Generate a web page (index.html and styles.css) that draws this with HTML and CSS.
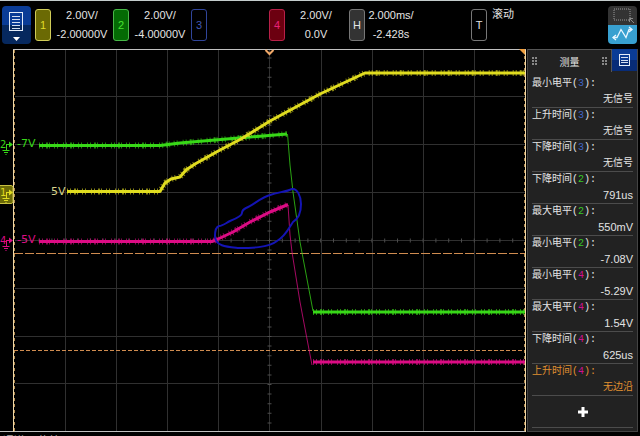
FILE: index.html
```html
<!DOCTYPE html>
<html lang="zh-CN">

<head>
    <meta charset="UTF-8">
    <meta name="viewport" content="width=device-width, initial-scale=1">
    <title>示波器</title>
    <link rel="stylesheet" href="styles.css">
</head>

<body>
    <header class="topbar">
        <button class="menu" type="button" aria-label="菜单">
            <svg width="29" height="38" viewBox="0 0 29 38">
                <rect x="7.500" y="6.500" width="13" height="18" fill="none" stroke="#e4ecf8" />
                <path d="M10 10.500h8M10 13.500h8M10 16.500h8M10 19.500h8M10 22.500h8" stroke="#d4def0" />
                <path d="M11 31h7l-3.500 4z" fill="#fff" />
            </svg>
        </button>
        <div class="channel">
            <button class="key ch1" type="button">1</button>
            <p class="scale">2.00V/<br>-2.00000V</p>
        </div>
        <div class="channel">
            <button class="key ch2" type="button">2</button>
            <p class="scale">2.00V/<br>-4.00000V</p>
        </div>
        <div class="channel">
            <button class="key ch3" type="button">3</button>
        </div>
        <div class="channel">
            <button class="key ch4" type="button">4</button>
            <p class="scale">2.00V/<br>0.0V</p>
        </div>
        <div class="horizontal">
            <button class="key hor" type="button">H</button>
            <p class="scale">2.000ms/<br>-2.428s</p>
        </div>
        <div class="trigger">
            <button class="key trig" type="button">T</button>
            <p class="mode">滚动</p>
        </div>
        <div class="touch">
            <button class="zone" type="button" aria-label="区域">
                <svg width="29" height="19" viewBox="0 0 29 19">
                    <rect x="6" y="3" width="16" height="11" fill="none" stroke="#999" stroke-dasharray="1 1" />
                    <path d="M26 17l-4-4M21.500 16v-3.500h3.500" fill="none" stroke="#888" />
                </svg>
            </button>
            <button class="drag" type="button" aria-label="波形">
                <svg width="29" height="19" viewBox="0 0 29 19">
                    <path d="M5 12.500h4l4-8 5 8 3-8h3" fill="none" stroke="#e8f6ff" stroke-width="1.300" />
                    <path d="M8 10l-3 2.500 3 2.500M21 2l3 2.500-3 2.500" fill="none" stroke="#e8f6ff" stroke-width="1.300" />
                </svg>
            </button>
        </div>
    </header>

    <main class="work">
        <svg class="plot" viewBox="0 49 527 384" role="img" aria-label="波形">
            <!-- grid -->
            <path class="grid" d="M65.500 50v382M116.500 50v382M167.500 50v382M218.500 50v382M269.500 50v382M321.500 50v382M372.500 50v382M423.500 50v382M474.500 50v382" />
            <path class="grid" d="M15 96.500h510M15 144.500h510M15 192.500h510M15 240.500h510M15 288.500h510M15 336.500h510M15 383.500h510" />
            <!-- the ticks are a thick line cut into 1px dashes -->
            <path class="tick" d="M269.500 48v384" stroke-dasharray="1 8.600" />
            <path class="tick" d="M13 240.500h512" stroke-dasharray="1 11.800" />

            <!-- frame -->
            <path class="edge" d="M13 49.500h513M0 431.500h526" />
            <path class="side" d="M13.500 50v382M525.500 50v382" />
            <path class="side-dash" d="M14.500 50v382M524.500 50v382" />
            <path class="corner" d="M519 49h6v6z" />
            <path class="trigger-mark" d="M265.500 50l4 4 4-4" />

            <!-- cursors -->
            <path class="cursor" d="M14 253.500h511" stroke-dasharray="9 2" />
            <path class="cursor" d="M14 350.500h511" stroke-dasharray="4 2" />

            <!-- traces -->
            <g class="green">
                <path class="thin" d="M287.500 134L290 165L293 192L300 242L313 311" />
                <path class="line" d="M39 145.500H160L180 143L287 134" />
                <path class="fuzz" d="M39 145.500H160L180 143L287 134" />
                <path class="line" d="M313 312H525" />
                <path class="fuzz" d="M313 312H525" />
            </g>
            <g class="pink">
                <path class="thin" d="M288 205L290 235L292 252L300 302L307 339L312 365" />
                <path class="line" d="M39 241.500H212L218 239L233 232L250 222L270 212L288 204.500" />
                <path class="fuzz" d="M39 241.500H212L218 239L233 232L250 222L270 212L288 204.500" />
                <path class="line" d="M313 362H525" />
                <path class="fuzz" d="M313 362H525" />
            </g>
            <g class="yellow">
                <path class="line" d="M67 191.500H160L165 183L171 179L180 177L186 170L195 164L220 150L241 139L270 121L320 94L365 73H525" />
                <path class="fuzz" d="M67 191.500H160L165 183L171 179L180 177L186 170L195 164L220 150L241 139L270 121L320 94L365 73H525" />
            </g>
            <path class="pen" d="M215 236C215 231 216 227 219 226C223 226 226 223 230 221C235 219 242 216 242 213C242 211 244 209 246 208C253 205 262 197 270 195C278 192 286 192 292 189C297 188 301 196 301 204C301 214 298 219 293 222C290 226 286 236 277 241C268 248 250 248 239 248C229 247 215 247 215 236z" />

            <!-- ground markers -->
            <g class="green">
                <text class="mark" x="0" y="148">2</text>
                <path class="ground" d="M6 144.500h4M6.500 144v6M2.500 150.500h7M4 152.500h4M5.500 154.500h1" />
                <path class="arrow" d="M9 141.500l4 3-4 3z" />
                <text class="level" x="17" y="147">-7V</text>
            </g>
            <g class="yellow">
                <rect x="-2" y="185.500" width="15" height="18" rx="2" fill="#6b6a08" stroke="#c8c040" />
                <text class="mark" x="0" y="196">1</text>
                <path class="ground" d="M6 192.500h3M6.500 192v6M2.500 198.500h7M4 200.500h4M5.500 202.500h1" />
                <path class="arrow" d="M9 189.500l4 3-4 3z" />
                <text class="level pale" x="51" y="195">5V</text>
            </g>
            <g class="pink">
                <text class="mark" x="0" y="244">4</text>
                <path class="ground" d="M6 240.500h4M6.500 240v6M2.500 246.500h7M4 248.500h4M5.500 250.500h1" />
                <path class="arrow" d="M9 237.500l4 3-4 3z" />
                <text class="level" x="17" y="243">-5V</text>
            </g>
        </svg>

        <aside class="panel">
            <div class="tabs">
                <button class="tab" type="button"><span class="grip"></span>测量<span class="grip"></span></button>
                <button class="list" type="button" aria-label="列表">
                    <svg width="25" height="22" viewBox="0 0 25 22">
                        <rect x="7.500" y="5.500" width="10" height="11" fill="none" stroke="#e4ecf8" />
                        <path d="M9 8.500h7M9 11.500h7M9 13.500h7" stroke="#d4def0" />
                    </svg>
                </button>
            </div>
            <dl class="measures">
                <div class="row"><dt>最小电平(<b class="c3">3</b>):</dt><dd class="none">无信号</dd></div>
                <div class="row"><dt>上升时间(<b class="c3">3</b>):</dt><dd class="none">无信号</dd></div>
                <div class="row"><dt>下降时间(<b class="c3">3</b>):</dt><dd class="none">无信号</dd></div>
                <div class="row"><dt>下降时间(<b class="c2">2</b>):</dt><dd>791us</dd></div>
                <div class="row"><dt>最大电平(<b class="c2">2</b>):</dt><dd>550mV</dd></div>
                <div class="row"><dt>最小电平(<b class="c2">2</b>):</dt><dd>-7.08V</dd></div>
                <div class="row"><dt>最小电平(<b class="c4">4</b>):</dt><dd>-5.29V</dd></div>
                <div class="row"><dt>最大电平(<b class="c4">4</b>):</dt><dd>1.54V</dd></div>
                <div class="row"><dt>下降时间(<b class="c4">4</b>):</dt><dd>625us</dd></div>
                <div class="row active"><dt>上升时间(<b class="c4">4</b>):</dt><dd class="none">无边沿</dd></div>
            </dl>
            <button class="add" type="button" aria-label="添加">
                <svg width="10" height="10" viewBox="0 0 10 10">
                    <path d="M5 0v10M0 5h10" stroke="#fff" stroke-width="3" />
                </svg>
            </button>
        </aside>
    </main>

    <footer class="softkeys">通道 1 菜单</footer>
</body>

</html>
```

FILE: styles.css
```css
* {
    box-sizing: border-box;
}

body {
    margin: 0;
    height: 100vh;
    overflow: hidden;
    background-color: #000;
    color: #e4e4e4;
    font-family: "Liberation Sans", "Noto Sans CJK SC", sans-serif;
    font-size: 11px;
}

button {
    margin: 0;
    padding: 0;
    border: 0;
    background: none;
    color: inherit;
    font: inherit;
    cursor: pointer;
}

svg {
    display: block;
}

p {
    margin: 0;
}

/* top bar */

.topbar {
    display: flex;
    height: 49px;
    padding: 5px 3px 0 2px;
    border-top: 1px solid #c4cccc;
}

.menu {
    width: 29px;
    height: 38px;
    margin-right: 4px;
    border-radius: 4px;
    background: linear-gradient(#0a3c96 50%, #06285e 50%);
}

.channel,
.horizontal,
.trigger {
    display: flex;
}

.channel {
    width: 78px;
}

.horizontal {
    width: 122px;
    padding-left: 2px;
}

.trigger {
    flex: 1;
    padding-left: 2px;
}

.key {
    width: 16px;
    height: 32px;
    margin-top: 3px;
    border: 1px solid;
    border-radius: 3px;
}

.ch1 {
    background-color: #6b6a04;
    border-color: #d0cc58;
    color: #e0dc28;
}

.ch2 {
    background-color: #046a04;
    border-color: #48b848;
    color: #48e030;
}

.ch3 {
    border-color: #30459a;
    color: #4258b4;
}

.ch4 {
    background-color: #6c0010;
    border-color: #b82048;
    color: #e82078;
}

.hor {
    background-color: #333;
    border-color: #777;
}

.trig {
    border-color: #777;
}

.scale {
    flex: 1;
    line-height: 19px;
    text-align: center;
}

.horizontal .scale {
    flex: none;
    width: 52px;
}

.mode {
    padding-left: 5px;
    line-height: 16px;
}

.touch {
    width: 29px;
    height: 38px;
    border-radius: 4px;
    overflow: hidden;
}

.touch button {
    display: block;
}

.zone {
    background-color: #333;
}

.drag {
    background-color: #38a0d0;
}

/* waveforms */

.work {
    display: flex;
    align-items: flex-start;
}

.plot {
    flex: 1;
    min-width: 0;
}

.plot path {
    fill: none;
}

.grid {
    stroke: #303030;
}

.tick {
    stroke: #4c4c4c;
    stroke-width: 4;
}

.edge {
    stroke: #c0c0c0;
}

.side {
    stroke: #f0d8a8;
}

.side-dash {
    stroke: #b08a50;
    stroke-dasharray: 3 3;
}

.plot .corner {
    fill: #f0a040;
}

.trigger-mark {
    stroke: #f0a868;
    stroke-width: 2;
}

.cursor {
    stroke: #d08c50;
}

.green {
    color: #38d818;
}

.pink {
    color: #dc0c84;
}

.yellow {
    color: #e0dc20;
}

.line,
.fuzz,
.thin,
.ground {
    stroke: currentColor;
}

.line {
    stroke-width: 3;
    stroke-linejoin: round;
}

.fuzz {
    stroke-width: 6;
    stroke-dasharray: 1 2 1 3 2 1 1 4 1 2 1 5;
    opacity: .6;
}

.thin {
    opacity: .75;
}

.plot .arrow {
    fill: currentColor;
}

.pen {
    stroke: #1414b4;
    stroke-width: 2;
}

.mark,
.level {
    fill: currentColor;
    font-family: "DejaVu Sans", sans-serif;
    font-size: 10px;
}

.level {
    font-size: 11px;
}

.pale {
    fill: #d8d48c;
}

/* measurement panel */

.panel {
    width: 111px;
    margin-right: 2px;
    padding-bottom: 3px;
    border: 1px solid #444;
    border-top: 0;
    background-color: #222;
}

.tabs {
    display: flex;
    height: 23px;
}

.tab {
    flex: 1;
    display: flex;
    justify-content: space-between;
    align-items: center;
    padding: 0 4px;
    border-top: 1px solid #555;
    border-right: 1px solid #555;
    font-size: 10px;
}

.grip {
    width: 5px;
    height: 8px;
    background: radial-gradient(circle at 1px 1px, #888 1px, transparent 1px) 0 0 / 3px 3px;
}

.list {
    width: 25px;
    height: 22px;
    background: linear-gradient(#0a3c96 50%, #082c78 50%);
}

.measures {
    margin: 0 4px;
    padding-top: 4px;
    font-family: "Liberation Mono", "Noto Sans CJK SC", monospace;
    font-size: 10px;
}

.row {
    height: 32px;
    border-bottom: 1px solid #4c4c4c;
}

.row dt,
.row dd {
    margin: 0;
    height: 15px;
    line-height: 16px;
}

.row dd {
    text-align: right;
    font-family: "Liberation Sans", "Noto Sans CJK SC", sans-serif;
    font-size: 11px;
}

.row .none {
    font-size: 10px;
}

.row b {
    font-weight: normal;
}

.c2 {
    color: #38c828;
}

.c3 {
    color: #4064c8;
}

.c4 {
    color: #d01090;
}

.active {
    color: #e09030;
}

.add {
    display: flex;
    justify-content: center;
    align-items: center;
    width: 101px;
    height: 32px;
    margin: 0 4px;
    border-bottom: 1px solid #4c4c4c;
}

.softkeys {
    padding-left: 3px;
    line-height: 16px;
    color: #aaa;
}
```
